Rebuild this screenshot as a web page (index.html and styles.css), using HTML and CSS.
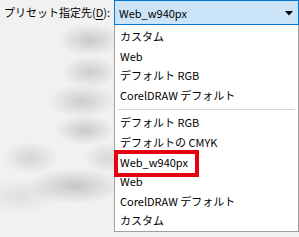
FILE: index.html
```html
<!DOCTYPE html>
<html lang="ja">
<head>
<meta charset="utf-8">
<link rel="stylesheet" href="styles.css">
</head>
<body>
<div class="page">
  <div class="side">
    <div class="label">プリセット指定先(<u>D</u>):</div>
  </div>
  <div class="field">
    <div class="combo">
      <span class="combo-text">Web_w940px</span>
      <svg class="arrow" width="8" height="5" viewBox="0 0 8 5"><path d="M0 0H8L4 4.5Z" fill="#000"/></svg>
    </div>
    <div class="list">
      <div class="group">
        <div class="item">カスタム</div>
        <div class="item">Web</div>
        <div class="item">デフォルト RGB</div>
        <div class="item">CorelDRAW デフォルト</div>
      </div>
      <div class="sep"></div>
      <div class="group">
        <div class="item">デフォルト RGB</div>
        <div class="item">デフォルトの CMYK</div>
        <div class="item marked">Web_w940px<span class="mark"></span></div>
        <div class="item">Web</div>
        <div class="item">CorelDRAW デフォルト</div>
        <div class="item">カスタム</div>
      </div>
    </div>
  </div>
</div>
</body>
</html>
```

FILE: styles.css
```css
html, body {
  margin: 0;
  padding: 0;
}
body {
  width: 299px;
  height: 237px;
  overflow: hidden;
  background-color: #f1f1f1;
  background-image:
    radial-gradient(ellipse 32px 16px at 90px 40px, rgba(175,175,175,0.6), rgba(200,200,200,0) 100%),
    radial-gradient(ellipse 28px 16px at 90px 72px, rgba(175,175,175,0.55), rgba(200,200,200,0) 100%),
    radial-gradient(ellipse 34px 17px at 82px 101px, rgba(175,175,175,0.55), rgba(200,200,200,0) 100%),
    radial-gradient(ellipse 30px 15px at 85px 130px, rgba(175,175,175,0.6), rgba(200,200,200,0) 100%),
    radial-gradient(ellipse 28px 16px at 30px 158px, rgba(175,175,175,0.45), rgba(200,200,200,0) 100%),
    radial-gradient(ellipse 48px 18px at 75px 186px, rgba(170,170,170,0.6), rgba(200,200,200,0) 100%),
    radial-gradient(ellipse 24px 16px at 108px 158px, rgba(175,175,175,0.4), rgba(200,200,200,0) 100%),
    radial-gradient(ellipse 40px 18px at 20px 196px, rgba(180,180,180,0.3), rgba(200,200,200,0) 100%);
  font-family: "Noto Sans CJK JP", "Noto Sans", sans-serif;
  font-size: 11px;
  color: #000;
}
.page {
  display: flex;
  align-items: flex-start;
}
.side {
  width: 114px;
  flex: none;
}
.label {
  padding-left: 4px;
  height: 25px;
  line-height: 24px;
  white-space: nowrap;
}
.label u {
  text-underline-offset: 2px;
}
.field {
  width: 185px;
  flex: none;
}
.combo {
  box-sizing: border-box;
  height: 25px;
  border: 1px solid #0078d7;
  background: #cce4f7;
  display: flex;
  align-items: center;
  justify-content: space-between;
  padding: 0 5px 0 4px;
}
.combo-text {
  line-height: 22px;
}
.arrow {
  display: block;
  margin-top: 1px;
}
.list {
  box-sizing: border-box;
  width: 185px;
  height: 207px;
  background: #fff;
  border: 1px solid #a0a0a0;
  border-top: none;
  padding-top: 2px;
}
.item {
  position: relative;
  height: 19.6px;
  line-height: 19.6px;
  padding-left: 5px;
  white-space: nowrap;
}
.sep {
  height: 1px;
  margin: 4px 3px 3px 3px;
  background: #d5d5d5;
}
.mark {
  position: absolute;
  left: -1px;
  top: -3px;
  width: 85px;
  height: 27px;
  box-sizing: border-box;
  border: 4px solid #e60012;
}
```
